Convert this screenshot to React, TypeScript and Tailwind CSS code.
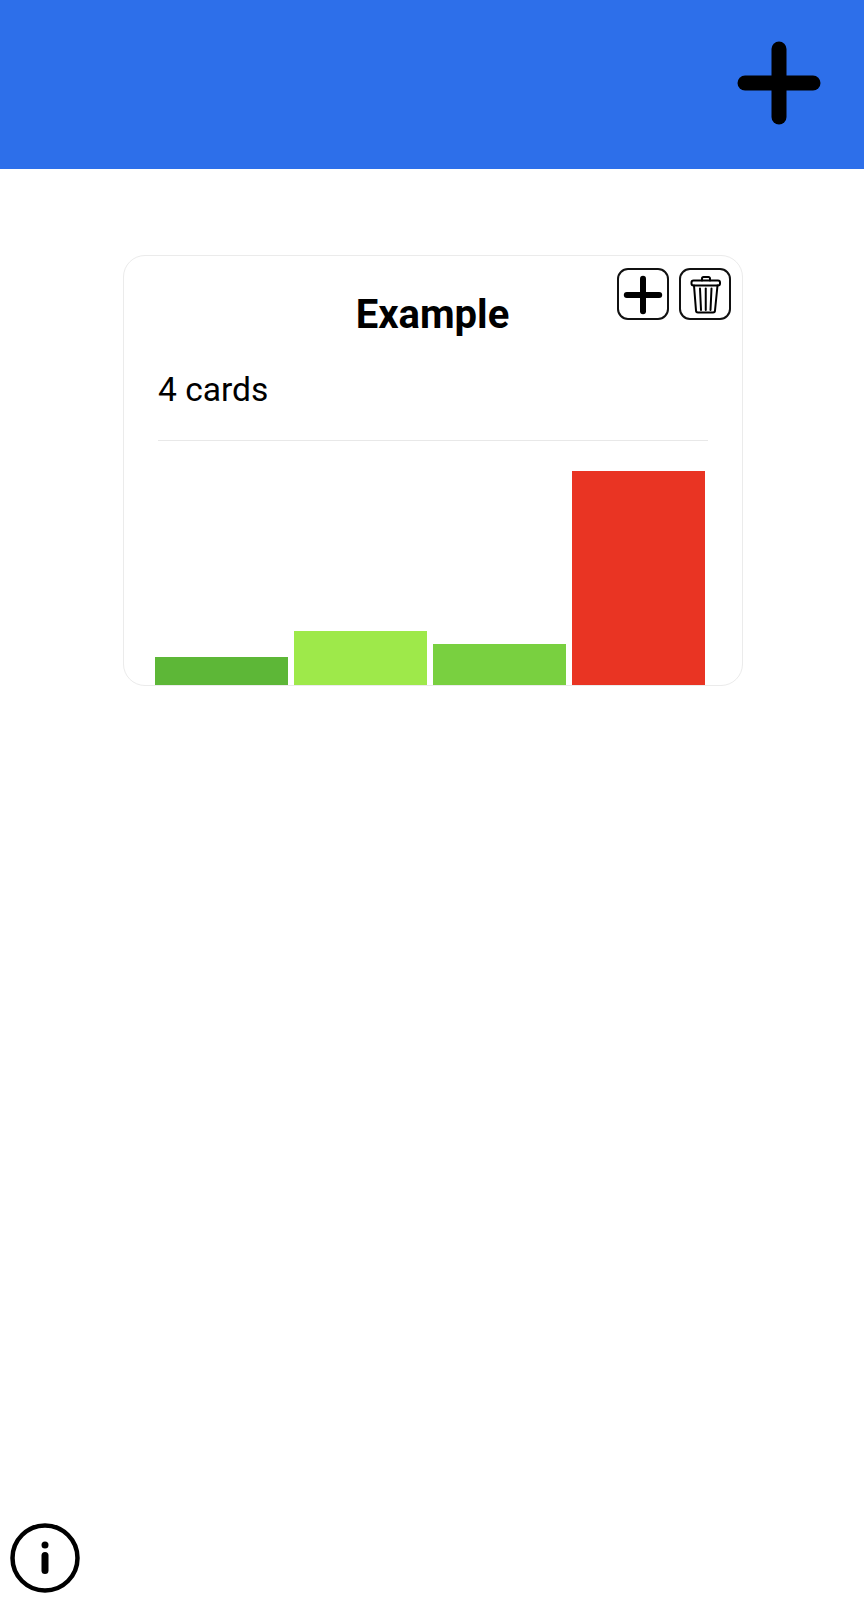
import React from 'react';

const bars = [
  { height: 'h-[28px]', color: 'bg-[#5db737]' },
  { height: 'h-[54px]', color: 'bg-[#9ee94a]' },
  { height: 'h-[41px]', color: 'bg-[#79d040]' },
  { height: 'h-[214px]', color: 'bg-[#e93423]' },
];

function PlusIcon({ className, strokeWidth }: { className: string; strokeWidth: number }) {
  return (
    <svg className={className} viewBox="0 0 84 84" fill="none" stroke="black" strokeWidth={strokeWidth} strokeLinecap="round">
      <path d="M42 8V76" />
      <path d="M8 42H76" />
    </svg>
  );
}

function TrashIcon() {
  return (
    <svg className="w-[40px] h-[40px]" viewBox="0 0 40 40" fill="none" stroke="black" strokeWidth={2} strokeLinecap="round" strokeLinejoin="round">
      <path d="M17 6.5V4.5a1.5 1.5 0 0 1 1.5-1.5h5a1.5 1.5 0 0 1 1.5 1.5V6.5" />
      <rect x="6.5" y="6.5" width="28.5" height="5" rx="2" />
      <path d="M9 11.5L11 36.5a2 2 0 0 0 2 2h15a2 2 0 0 0 2-2L32.5 11.5" />
      <path d="M15 14.5L16 36" />
      <path d="M20.75 14.5V36" />
      <path d="M26.5 14.5L25.5 36" />
    </svg>
  );
}

function InfoIcon() {
  return (
    <svg className="w-[72px] h-[72px]" viewBox="0 0 72 72" fill="none">
      <circle cx="36" cy="36" r="32.5" stroke="black" strokeWidth={4.5} />
      <circle cx="36" cy="23" r="3.5" fill="black" />
      <path d="M36 33.5V48.5" stroke="black" strokeWidth={7} strokeLinecap="round" />
    </svg>
  );
}

export default function App() {
  return (
    <div className="h-[1600px] flex flex-col bg-white font-['Roboto',sans-serif] text-black">
      <header className="h-[169px] bg-[#2d6fea] flex items-center justify-end pr-[43px] pb-[3px] shrink-0">
        <PlusIcon className="w-[84px] h-[84px]" strokeWidth={15} />
      </header>

      <main className="flex justify-center pt-[86px] pl-[2px]">
        <div className="relative w-[620px] h-[431px] border-[1.5px] border-[#ebebeb] rounded-[22px] pl-[34px] pr-[34px] flex flex-col">
          <div className="absolute top-[11.5px] right-[11.5px] flex gap-[10px]">
            <button className="w-[52px] h-[52px] border-2 border-[#111111] rounded-[11px] flex items-center justify-center pt-[2px] pl-[1px]">
              <PlusIcon className="w-[40px] h-[40px]" strokeWidth={12.6} />
            </button>
            <button className="w-[52px] h-[52px] border-2 border-[#111111] rounded-[11px] flex items-center justify-center">
              <TrashIcon />
            </button>
          </div>

          <h2 className="text-[40px] leading-[46px] font-bold text-center mt-[35.5px] pr-[1px]">Example</h2>
          <p className="text-[33.6px] leading-[38px] mt-[33px]">4 cards</p>
          <div className="h-[1px] bg-[#e8e8e8] mt-[31px]" />

          <div className="flex-1 flex items-end gap-[6px] -ml-[3.5px]">
            {bars.map((bar, i) => (
              <div key={i} className={`w-[133px] ${bar.height} ${bar.color}`} />
            ))}
          </div>
        </div>
      </main>

      <footer className="mt-auto pl-[9px] pb-[6px]">
        <InfoIcon />
      </footer>
    </div>
  );
}
